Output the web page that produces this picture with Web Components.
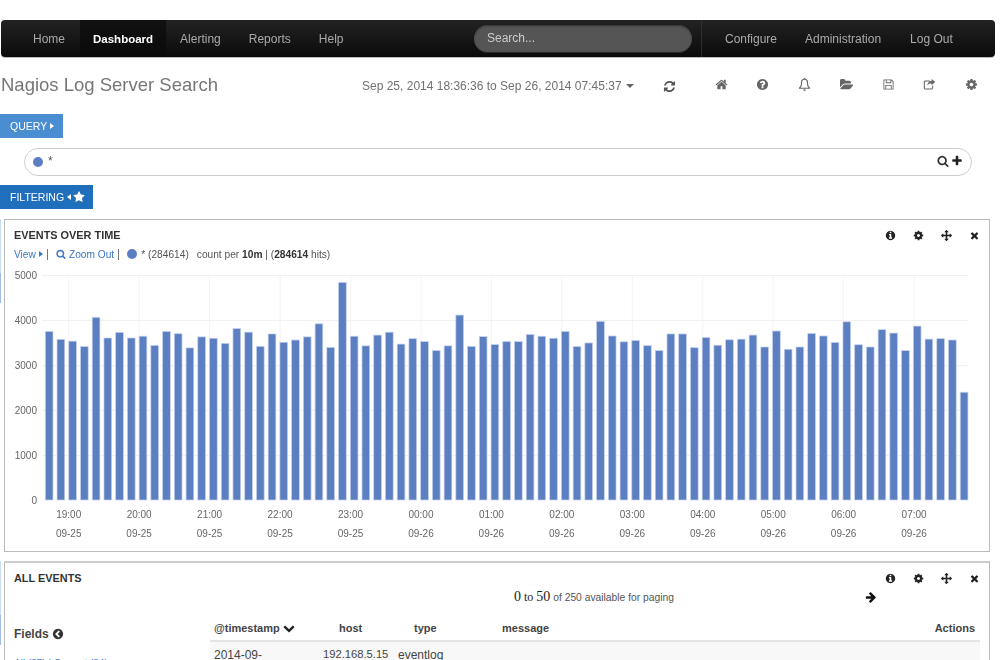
<!DOCTYPE html>
<html>
<head>
<meta charset="utf-8">
<title>Nagios Log Server Search</title>
<style>
  html, body { margin: 0; height: 660px; overflow: hidden; background: #fff; }
  body { font-family: "Liberation Sans", Arial, sans-serif; color: #333; }
</style>
</head>
<body>
<log-page>
  <top-nav></top-nav>
  <search-header></search-header>
  <section-button label="QUERY" tone="query"></section-button>
  <query-input></query-input>
  <section-button label="FILTERING" tone="filter"></section-button>
  <log-panel title="EVENTS OVER TIME" class="p1"><events-chart></events-chart></log-panel>
  <log-panel title="ALL EVENTS" class="p2"><events-table></events-table></log-panel>
</log-page>

<script>
// font awesome 4 style glyphs, drawn on a 1792 box
const ICONS = {
  refresh: 'M1639 1056q0 5-1 7-64 268-268 434.5t-478 166.5q-146 0-282.5-55t-243.5-157l-129 129q-19 19-45 19t-45-19-19-45v-448q0-26 19-45t45-19h448q26 0 45 19t19 45-19 45l-137 137q71 66 161 102t187 36q134 0 250-65t186-179q11-17 53-117 8-23 30-23h192q13 0 22.5 9.5t9.5 22.5zm25-800v448q0 26-19 45t-45 19h-448q-26 0-45-19t-19-45 19-45l138-138q-148-137-349-137-134 0-250 65t-186 179q-11 17-53 117-8 23-30 23h-199q-13 0-22.5-9.5t-9.5-22.5v-7q65-268 270-434.5t480-166.5q146 0 284 55.5t245 156.5l130-129q19-19 45-19t45 19 19 45z',
  home: 'M1472 992v480q0 26-19 45t-45 19h-384v-384h-256v384h-384q-26 0-45-19t-19-45v-480q0-1 .5-3t.5-3l575-474 575 474q1 2 1 6zm223-69l-62 74q-8 9-21 11h-3q-13 0-21-7l-692-577-692 577q-12 8-24 7-13-2-21-11l-62-74q-8-10-7-23.5t11-21.5l719-599q32-26 76-26t76 26l244 204v-195q0-14 9-23t23-9h192q14 0 23 9t9 23v408l219 182q10 8 11 21.5t-7 23.5z',
  question: 'M1024 1376v-192q0-14-9-23t-23-9h-192q-14 0-23 9t-9 23v192q0 14 9 23t23 9h192q14 0 23-9t9-23zm256-672q0-88-55.5-163t-138.5-116-170-41q-243 0-371 213-15 24 8 42l132 100q7 6 19 6 16 0 25-12 53-68 86-92 34-24 86-24 48 0 85.5 26t37.5 59q0 38-20 61t-68 45q-63 28-115.5 86.5t-52.5 125.5v36q0 14 9 23t23 9h192q14 0 23-9t9-23q0-19 21.5-49.5t54.5-49.5q32-18 49-28.5t46-35 44.5-48 28-60.5 12.5-81zm384 192q0 209-103 385.5t-279.5 279.5-385.5 103-385.5-103-279.5-279.5-103-385.5 103-385.5 279.5-279.5 385.5-103 385.5 103 279.5 279.5 103 385.5z',
  folder: 'M1850 952q0 31-31 66l-336 396q-43 51-120.5 86.5t-143.5 35.5h-1088q-34 0-60.5-13t-26.5-43q0-31 31-66l336-396q43-51 120.5-86.5t143.5-35.5h1088q34 0 60.5 13t26.5 43zm-343-344v160h-832q-94 0-197 47.5t-164 119.5l-337 396-5 6q0-4-.5-12.5t-.5-12.5v-960q0-92 66-158t158-66h320q92 0 158 66t66 158v32h544q92 0 158 66t66 158z',
  cog: 'M1152 896q0-106-75-181t-181-75-181 75-75 181 75 181 181 75 181-75 75-181zm512-109v222q0 12-8 23t-20 13l-185 28q-19 54-39 91 35 50 107 138 10 12 10 25t-9 23q-27 37-99 108t-94 71q-12 0-26-9l-138-108q-44 23-91 38-16 136-29 186-7 28-36 28h-222q-14 0-24.5-8.5t-11.5-21.5l-28-184q-49-16-90-37l-141 107q-10 9-25 9-14 0-25-11-126-114-165-168-7-10-7-23 0-12 8-23 15-21 51-66.5t54-70.5q-27-50-41-99l-183-27q-13-2-21-12.5t-8-23.5v-222q0-12 8-23t19-13l186-28q14-46 39-92-40-57-107-138-10-12-10-24 0-10 9-23 26-36 98.5-107.5t94.5-71.5q13 0 26 10l138 107q44-23 91-38 16-136 29-186 7-28 36-28h222q14 0 24.5 8.5t11.5 21.5l28 184q49 16 90 37l142-107q9-9 24-9 13 0 25 10 129 119 165 170 7 8 7 22 0 12-8 23-15 21-51 66.5t-54 70.5q26 50 41 98l183 28q13 2 21 12.5t8 23.5z',
  info: 'M1152 1376v-160q0-14-9-23t-23-9h-96v-512q0-14-9-23t-23-9h-320q-14 0-23 9t-9 23v160q0 14 9 23t23 9h96v320h-96q-14 0-23 9t-9 23v160q0 14 9 23t23 9h448q14 0 23-9t9-23zm-128-896v-160q0-14-9-23t-23-9h-192q-14 0-23 9t-9 23v160q0 14 9 23t23 9h192q14 0 23-9t9-23zm640 416q0 209-103 385.5t-279.5 279.5-385.5 103-385.5-103-279.5-279.5-103-385.5 103-385.5 279.5-279.5 385.5-103 385.5 103 279.5 279.5 103 385.5z',
  move: 'M1792 896q0 26-19 45l-256 256q-19 19-45 19t-45-19-19-45v-128h-384v384h128q26 0 45 19t19 45-19 45l-256 256q-19 19-45 19t-45-19l-256-256q-19-19-19-45t19-45 45-19h128v-384h-384v128q0 26-19 45t-45 19-45-19l-256-256q-19-19-19-45t19-45l256-256q19-19 45-19t45 19 19 45v128h384v-384h-128q-26 0-45-19t-19-45 19-45l256-256q19-19 45-19t45 19l256 256q19 19 19 45t-19 45-45 19h-128v384h384v-128q0-26 19-45t45-19 45 19l256 256q19 19 19 45z',
  times: 'M1490 1322q0 40-28 68l-136 136q-28 28-68 28t-68-28l-294-294-294 294q-28 28-68 28t-68-28l-136-136q-28-28-28-68t28-68l294-294-294-294q-28-28-28-68t28-68l136-136q28-28 68-28t68 28l294 294 294-294q28-28 68-28t68 28l136 136q28 28 28 68t-28 68l-294 294 294 294q28 28 28 68z',
  search: 'M1216 832q0-185-131.5-316.5t-316.5-131.5-316.5 131.5-131.5 316.5 131.5 316.5 316.5 131.5 316.5-131.5 131.5-316.5zm512 832q0 52-38 90t-90 38q-54 0-90-38l-343-342q-179 124-399 124-143 0-273.5-55.5t-225-150-150-225-55.5-273.5 55.5-273.5 150-225 225-150 273.5-55.5 273.5 55.5 225 150 150 225 55.5 273.5q0 220-124 399l343 343q37 37 37 90z',
  plus: 'M1600 736v192q0 40-28 68t-68 28h-416v416q0 40-28 68t-68 28h-192q-40 0-68-28t-28-68v-416h-416q-40 0-68-28t-28-68v-192q0-40 28-68t68-28h416v-416q0-40 28-68t68-28h192q40 0 68 28t28 68v416h416q40 0 68 28t28 68z',
  star: 'M1728 647q0 22-26 48l-363 354 86 500q1 7 1 20 0 21-10.5 35.5t-30.5 14.5q-19 0-40-12l-449-236-449 236q-22 12-40 12-21 0-31.5-14.5t-10.5-35.5q0-6 2-20l86-500-364-354q-25-27-25-48 0-37 56-46l502-73 225-455q19-41 49-41t49 41l225 455 502 73q56 9 56 46z',
  arrow: 'M1600 960q0 54-37 91l-651 651q-39 37-91 37-51 0-90-37l-75-75q-38-38-38-91t38-91l293-293h-704q-52 0-84.5-37.5t-32.5-90.5v-128q0-53 32.5-90.5t84.5-37.5h704l-293-294q-38-36-38-90t38-90l75-75q38-38 90-38 53 0 91 38l651 651q37 35 37 90z',
  chevron: 'M1683 808l-742 741q-19 19-45 19t-45-19l-742-741q-19-19-19-45.5t19-45.5l166-165q19-19 45-19t45 19l531 531 531-531q19-19 45-19t45 19l166 165q19 19 19 45.5t-19 45.5z',
  backcircle: 'M1037 1395l102-102q19-19 19-45t-19-45l-307-307 307-307q19-19 19-45t-19-45l-102-102q-19-19-45-19t-45 19l-454 454q-19 19-19 45t19 45l454 454q19 19 45 19t45-19zm627-499q0 209-103 385.5t-279.5 279.5-385.5 103-385.5-103-279.5-279.5-103-385.5 103-385.5 279.5-279.5 385.5-103 385.5 103 279.5 279.5 103 385.5z',
  // outlined ones, fill-rule evenodd
  bell: 'M896 180c60 0 95 40 95 92 170 30 280 170 280 350 0 330 70 450 220 600v110H301v-110c150-150 220-270 220-600 0-180 110-320 280-350 0-52 35-92 95-92zm0 190c-160 0-255 110-255 260 0 300-50 450-170 590h850c-120-140-170-290-170-590 0-150-95-260-255-260zM745 1420h302c0 80-65 150-151 150s-151-70-151-150z',
  save: 'M260 200h1060l270 270v1120H260c-35 0-60-25-60-60V260c0-35 25-60 60-60zm60 120v1150h140V960h870v510h140V530l-190-190v370H530V320zm330 0v270h500V320zM580 1080v390h630v-390z',
  share: 'M300 360h640v130H340c-45 0-80 35-80 80v800c0 45 35 80 80 80h850c45 0 80-35 80-80v-270l130-110v400c0 110-90 190-190 190H300c-110 0-190-90-190-190V550c0-110 90-190 190-190zm880-230 500 430-500 430V760c-300 0-450 50-570 260 0-390 240-600 570-620z'
};
const BOXES = { bell: '200 180 1390 1390' };

const iconTpl = document.createElement('template');
iconTpl.innerHTML = `
  <style>
    :host { display: inline-flex; flex: none; width: var(--size, 12px); height: var(--size, 12px); }
    svg { width: 100%; height: 100%; fill: currentColor; display: block; fill-rule: evenodd; }
  </style>
  <svg viewBox="0 0 1792 1792"><path></path></svg>
`;
class FaIcon extends HTMLElement {
  constructor() {
    super();
    this.attachShadow({ mode: 'open' }).appendChild(iconTpl.content.cloneNode(true));
  }
  connectedCallback() {
    const name = this.getAttribute('name');
    this.shadowRoot.querySelector('path').setAttribute('d', ICONS[name]);
    if (BOXES[name]) this.shadowRoot.querySelector('svg').setAttribute('viewBox', BOXES[name]);
  }
}
customElements.define('fa-icon', FaIcon);

class LogPage extends HTMLElement {
  constructor() {
    super();
    this.attachShadow({ mode: 'open' }).innerHTML = `
      <style>
        :host { display: block; padding-top: 20px; filter: blur(.4px); }
      </style>
      <slot></slot>
    `;
  }
}
customElements.define('log-page', LogPage);

const navTpl = document.createElement('template');
navTpl.innerHTML = `
  <style>
    :host { display: flex; height: 37px; margin: 0 5px 0 1px; border-radius: 4px; font-size: 12px; color: #aaa;
      background: linear-gradient(#222, #0b0b0b); box-shadow: 0 1px 0 #bbb; align-items: stretch; }
    a { display: flex; align-items: center; padding: 0 14px; }
    .on { color: #fff; font-weight: bold; font-size: 11.5px; padding: 0 13px; margin-left: 1px; background: linear-gradient(#111, #0a0a0a); }
    .left { display: flex; padding-left: 18px; width: 473px; box-sizing: border-box; }
    .search { width: 218px; height: 27px; margin-top: 5px; box-sizing: border-box; border-radius: 14px; padding-left: 13px;
      background: #555; color: #ccc; line-height: 26px; box-shadow: inset 0 1px 2px #333, 0 1px 0 #2c2c2c; }
    .right { display: flex; margin-left: 9px; padding-left: 9px; border-left: 1px solid #2e2e2e; }
    .right a:last-child { padding-left: 15px; }
  </style>
  <div class="left"><a>Home</a><a class="on">Dashboard</a><a>Alerting</a><a>Reports</a><a>Help</a></div>
  <div class="search">Search...</div>
  <div class="right"><a>Configure</a><a>Administration</a><a>Log Out</a></div>
`;
class TopNav extends HTMLElement {
  constructor() {
    super();
    this.attachShadow({ mode: 'open' }).appendChild(navTpl.content.cloneNode(true));
  }
}
customElements.define('top-nav', TopNav);

const headTpl = document.createElement('template');
headTpl.innerHTML = `
  <style>
    :host { display: flex; align-items: center; height: 57px; color: #777; }
    h1 { margin: -2px 0 0 1px; font-size: 18.5px; font-weight: normal; flex: 0 0 360px; white-space: nowrap; }
    .range { font-size: 12px; flex: 0 0 272px; margin-left: 1px; color: #707070; white-space: nowrap; }
    .caret { display: inline-block; border: 4px solid transparent; border-top-color: #666; border-bottom: 0; margin-left: 4px; vertical-align: 2px; }
    .refresh { margin: 2px 39px 0 28.5px; --size: 13px; color: #555; }
    .tools { display: flex; margin-top: -2px; }
    .tools fa-icon { --size: 13px; margin-right: 28.8px; color: #666; }
    .tools fa-icon:last-child { margin-right: 0; }
  </style>
  <h1>Nagios Log Server Search</h1>
  <div class="range">Sep 25, 2014 18:36:36 to Sep 26, 2014 07:45:37<i class="caret"></i></div>
  <fa-icon class="refresh" name="refresh"></fa-icon>
  <div class="tools">
    <fa-icon name="home"></fa-icon><fa-icon name="question"></fa-icon><fa-icon name="bell"></fa-icon><fa-icon name="folder"></fa-icon><fa-icon name="save"></fa-icon><fa-icon name="share"></fa-icon><fa-icon name="cog"></fa-icon>
  </div>
`;
class SearchHeader extends HTMLElement {
  constructor() {
    super();
    this.attachShadow({ mode: 'open' }).appendChild(headTpl.content.cloneNode(true));
  }
}
customElements.define('search-header', SearchHeader);

class SectionButton extends HTMLElement {
  constructor() {
    super();
    const filter = this.getAttribute('tone') === 'filter';
    this.attachShadow({ mode: 'open' }).innerHTML = `
      <style>
        :host { display: flex; width: max-content; height: 24px; align-items: center; padding: 0 ${filter ? 8 : 9}px 0 10px; box-sizing: border-box;
          color: #fff; font-size: 10.5px; background: ${filter ? '#1f6fbd' : '#4a8dd0'}; margin-top: ${filter ? 9 : 0}px; }
        i { border: 3.5px solid transparent; margin-left: 3px; }
        .r { border-left: 4px solid #fff; border-right: 0; }
        .l { border-right: 4px solid #fff; border-left: 0; margin-right: 2px; }
        fa-icon { --size: 12px; }
      </style>
      ${this.getAttribute('label')}${filter ? '<i class="l"></i><fa-icon name="star"></fa-icon>' : '<i class="r"></i>'}
    `;
  }
}
customElements.define('section-button', SectionButton);

const queryTpl = document.createElement('template');
queryTpl.innerHTML = `
  <style>
    :host { display: flex; align-items: center; height: 28px; margin: 10px 28px 0 24px; box-sizing: border-box; border: 1px solid #ccc;
      border-radius: 15px; padding: 0 8px 0 8px; font-size: 12px; color: #555; }
    .dot { width: 10px; height: 10px; border-radius: 50%; background: #5c7fc4; margin-right: 5px; }
    .q { flex: 1; margin-top: -2px; }
    fa-icon { color: #333; --size: 12px; margin: -2px 0 0 2px; }
    fa-icon[name=plus] { color: #222; }
  </style>
  <span class="dot"></span><span class="q">*</span>
  <fa-icon name="search"></fa-icon><fa-icon name="plus"></fa-icon>
`;
class QueryInput extends HTMLElement {
  constructor() {
    super();
    this.attachShadow({ mode: 'open' }).appendChild(queryTpl.content.cloneNode(true));
  }
}
customElements.define('query-input', QueryInput);

const panelTpl = document.createElement('template');
panelTpl.innerHTML = `
  <style>
    :host { display: flex; margin-right: 10px; }
    .strip { width: 1px; height: 84px; flex: none; margin: 0 3px 0 0; background: linear-gradient(#c8dcf5 64%, #a3bbe8 64%); }
    .box { flex: 1; min-width: 0; border: 1px solid #bbb; background: #fff; box-sizing: border-box; }
    header { display: flex; justify-content: space-between; align-items: center; height: 14px; padding: 8px 9px 0 9px; }
    h2 { margin: 0; font-size: 10.9px; font-weight: bold; color: #333; }
    .acts { display: flex; color: #222; }
    .acts fa-icon { --size: 11px; margin-left: 17px; }
  </style>
  <div class="strip"></div>
  <div class="box">
    <header><h2></h2><div class="acts">
      <fa-icon name="info"></fa-icon><fa-icon name="cog"></fa-icon><fa-icon name="move"></fa-icon><fa-icon name="times"></fa-icon>
    </div></header>
    <slot></slot>
  </div>
`;
class LogPanel extends HTMLElement {
  constructor() {
    super();
    this.attachShadow({ mode: 'open' }).appendChild(panelTpl.content.cloneNode(true));
    this.shadowRoot.querySelector('h2').textContent = this.getAttribute('title');
    this.removeAttribute('title');
    const first = this.classList.contains('p1');
    this.style.marginTop = first ? '10px' : '9px';
    if (first) this.shadowRoot.querySelector('.box').style.height = '333px';
    else this.shadowRoot.querySelector('.box').style.cssText = 'border-top:2px solid #ccc;border-bottom:0;height:110px';
  }
}
customElements.define('log-panel', LogPanel);

// bar values read off the reference
const BARS = [3745,3570,3530,3410,4060,3600,3725,3600,3640,3435,3745,3695,3380,3625,3595,3480,3810,3730,3415,3690,3505,3555,3625,3915,3390,4835,3640,3425,3665,3730,3465,3585,3520,3320,3425,4110,3415,3630,3455,3520,3520,3680,3640,3595,3745,3410,3490,3970,3645,3515,3545,3430,3320,3690,3690,3385,3610,3440,3560,3575,3665,3400,3755,3350,3400,3700,3645,3500,3960,3450,3400,3785,3710,3320,3865,3575,3585,3555,2395];
const HOURS = ['19:00','20:00','21:00','22:00','23:00','00:00','01:00','02:00','03:00','04:00','05:00','06:00','07:00'];

const chartTpl = document.createElement('template');
chartTpl.innerHTML = `
  <style>
    :host { display: block; font-size: 10.2px; color: #555; }
    .meta { display: flex; align-items: center; height: 14px; margin: 5px 0 0 9px; white-space: nowrap; }
    .link { color: #3a77c4; }
    .sep { width: 1px; height: 11px; background: #777; }
    .caret { border: 3px solid transparent; border-left: 4px solid #3a77c4; border-right: 0; margin: 0 4px 0 3px; }
    fa-icon { --size: 10px; color: #3a77c4; margin: 0 3px 0 8px; }
    .dot { width: 10px; height: 10px; border-radius: 50%; background: #5c7fc4; margin: 0 4px 0 8px; }
    b { color: #333; }
    svg { display: block; margin-top: 1px; }
    text { font-family: "Liberation Sans", Arial, sans-serif; font-size: 10px; fill: #666; }
  </style>
  <div class="meta">
    <span class="link">View</span><i class="caret"></i><span class="sep"></span>
    <fa-icon name="search"></fa-icon><span class="link">Zoom Out</span><span class="sep" style="margin-left:4px"></span>
    <span class="dot"></span><span>* (284614)</span><span style="margin-left:8px">count per&nbsp;<b>10m</b>&nbsp;| (<b>284614</b> hits)</span>
  </div>
  <svg width="983" height="290" xmlns="http://www.w3.org/2000/svg"></svg>
`;
class EventsChart extends HTMLElement {
  constructor() {
    super();
    this.attachShadow({ mode: 'open' }).appendChild(chartTpl.content.cloneNode(true));
    this.draw();
  }
  draw() {
    // coordinates are page ones, the group moves them into the panel
    let s = '<g transform="translate(-5,-262)">';
    for (let v = 0; v <= 5; v++) {
      const y = 500 - v * 45;
      if (v) s += `<line x1="42" x2="968" y1="${y + .5}" y2="${y + .5}" stroke="#f1f1f1"/>`;
      s += `<text x="37" y="${y + 3.5}" text-anchor="end">${v * 1000}</text>`;
    }
    HOURS.forEach((h, i) => {
      const x = 68.7 + i * 70.45;
      s += `<line x1="${x}" x2="${x}" y1="275" y2="500" stroke="#f3f3f3"/>`;
      s += `<text x="${x}" y="518" text-anchor="middle">${h}</text>`;
      s += `<text x="${x}" y="537" text-anchor="middle">${i < 5 ? '09-25' : '09-26'}</text>`;
    });
    BARS.forEach((b, i) => {
      const h = b * .045;
      s += `<rect x="${45.3 + i * 11.73}" y="${500 - h}" width="7.7" height="${h}" fill="#5c7fc2" stroke="#c3d2ef" stroke-width=".7"/>`;
    });
    this.shadowRoot.querySelector('svg').innerHTML = s + '</g>';
  }
}
customElements.define('events-chart', EventsChart);

const tableTpl = document.createElement('template');
tableTpl.innerHTML = `
  <style>
    :host { display: block; font-size: 11px; color: #444; }
    .pager { height: 16px; padding-left: 509px; display: flex; align-items: center; margin-top: 4px; font-size: 10.3px; color: #555; position: relative; white-space: pre; }
    .pager .n { font-size: 12px; color: #222; font-family: "Liberation Serif", serif; }
    .pager .n b { font-size: 14px; font-weight: normal; }
    .pager fa-icon { --size: 12px; color: #111; position: absolute; left: 860px; }
    .body { display: flex; margin-top: 8px; }
    .side { width: 205px; flex: none; padding: 14px 0 0 9px; box-sizing: border-box; }
    .side h3 { margin: 0; font-size: 12px; font-weight: bold; color: #444; display: flex; align-items: center; gap: 3px; }
    .side fa-icon { --size: 12px; color: #333; }
    .fields { margin-top: 17px; font-size: 10px; color: #3a77c4; white-space: nowrap; }
    .grid { flex: 1; margin-right: 9px; }
    .row { display: grid; grid-template-columns: 109px 75px 100px 1fr auto; }
    .hd { height: 20px; padding-bottom: 2px; align-items: center; font-weight: bold; border-bottom: 2px solid #e4e4e4; margin-top: 5px; color: #444; }
    .hd span:first-child { padding-left: 4px; display: flex; align-items: center; gap: 3px; }
    .hd span:first-child fa-icon { --size: 12px; color: #222; }
    .rw { background: #f8f8f8; font-size: 12px; padding-top: 6px; height: 20px; color: #444; }
    .rw span { padding-left: 4px; white-space: nowrap; }
  </style>
  <div class="pager"><span class="n"><b>0</b> to <b>50</b></span> of 250 available for paging<fa-icon name="arrow"></fa-icon></div>
  <div class="body">
    <div class="side">
      <h3>Fields <fa-icon name="backcircle"></fa-icon></h3>
      <div class="fields">All (35) | Current (34)</div>
    </div>
    <div class="grid">
      <div class="row hd"><span>@timestamp <fa-icon name="chevron"></fa-icon></span><span style="padding-left:20px">host</span><span style="padding-left:20px">type</span><span style="padding-left:8px">message</span><span style="padding-right:5px">Actions</span></div>
      <div class="row rw"><span>2014-09-</span><span style="font-size:11.2px">192.168.5.15</span><span>eventlog</span></div>
    </div>
  </div>
`;
class EventsTable extends HTMLElement {
  constructor() {
    super();
    this.attachShadow({ mode: 'open' }).appendChild(tableTpl.content.cloneNode(true));
  }
}
customElements.define('events-table', EventsTable);
</script>
</body>
</html>
